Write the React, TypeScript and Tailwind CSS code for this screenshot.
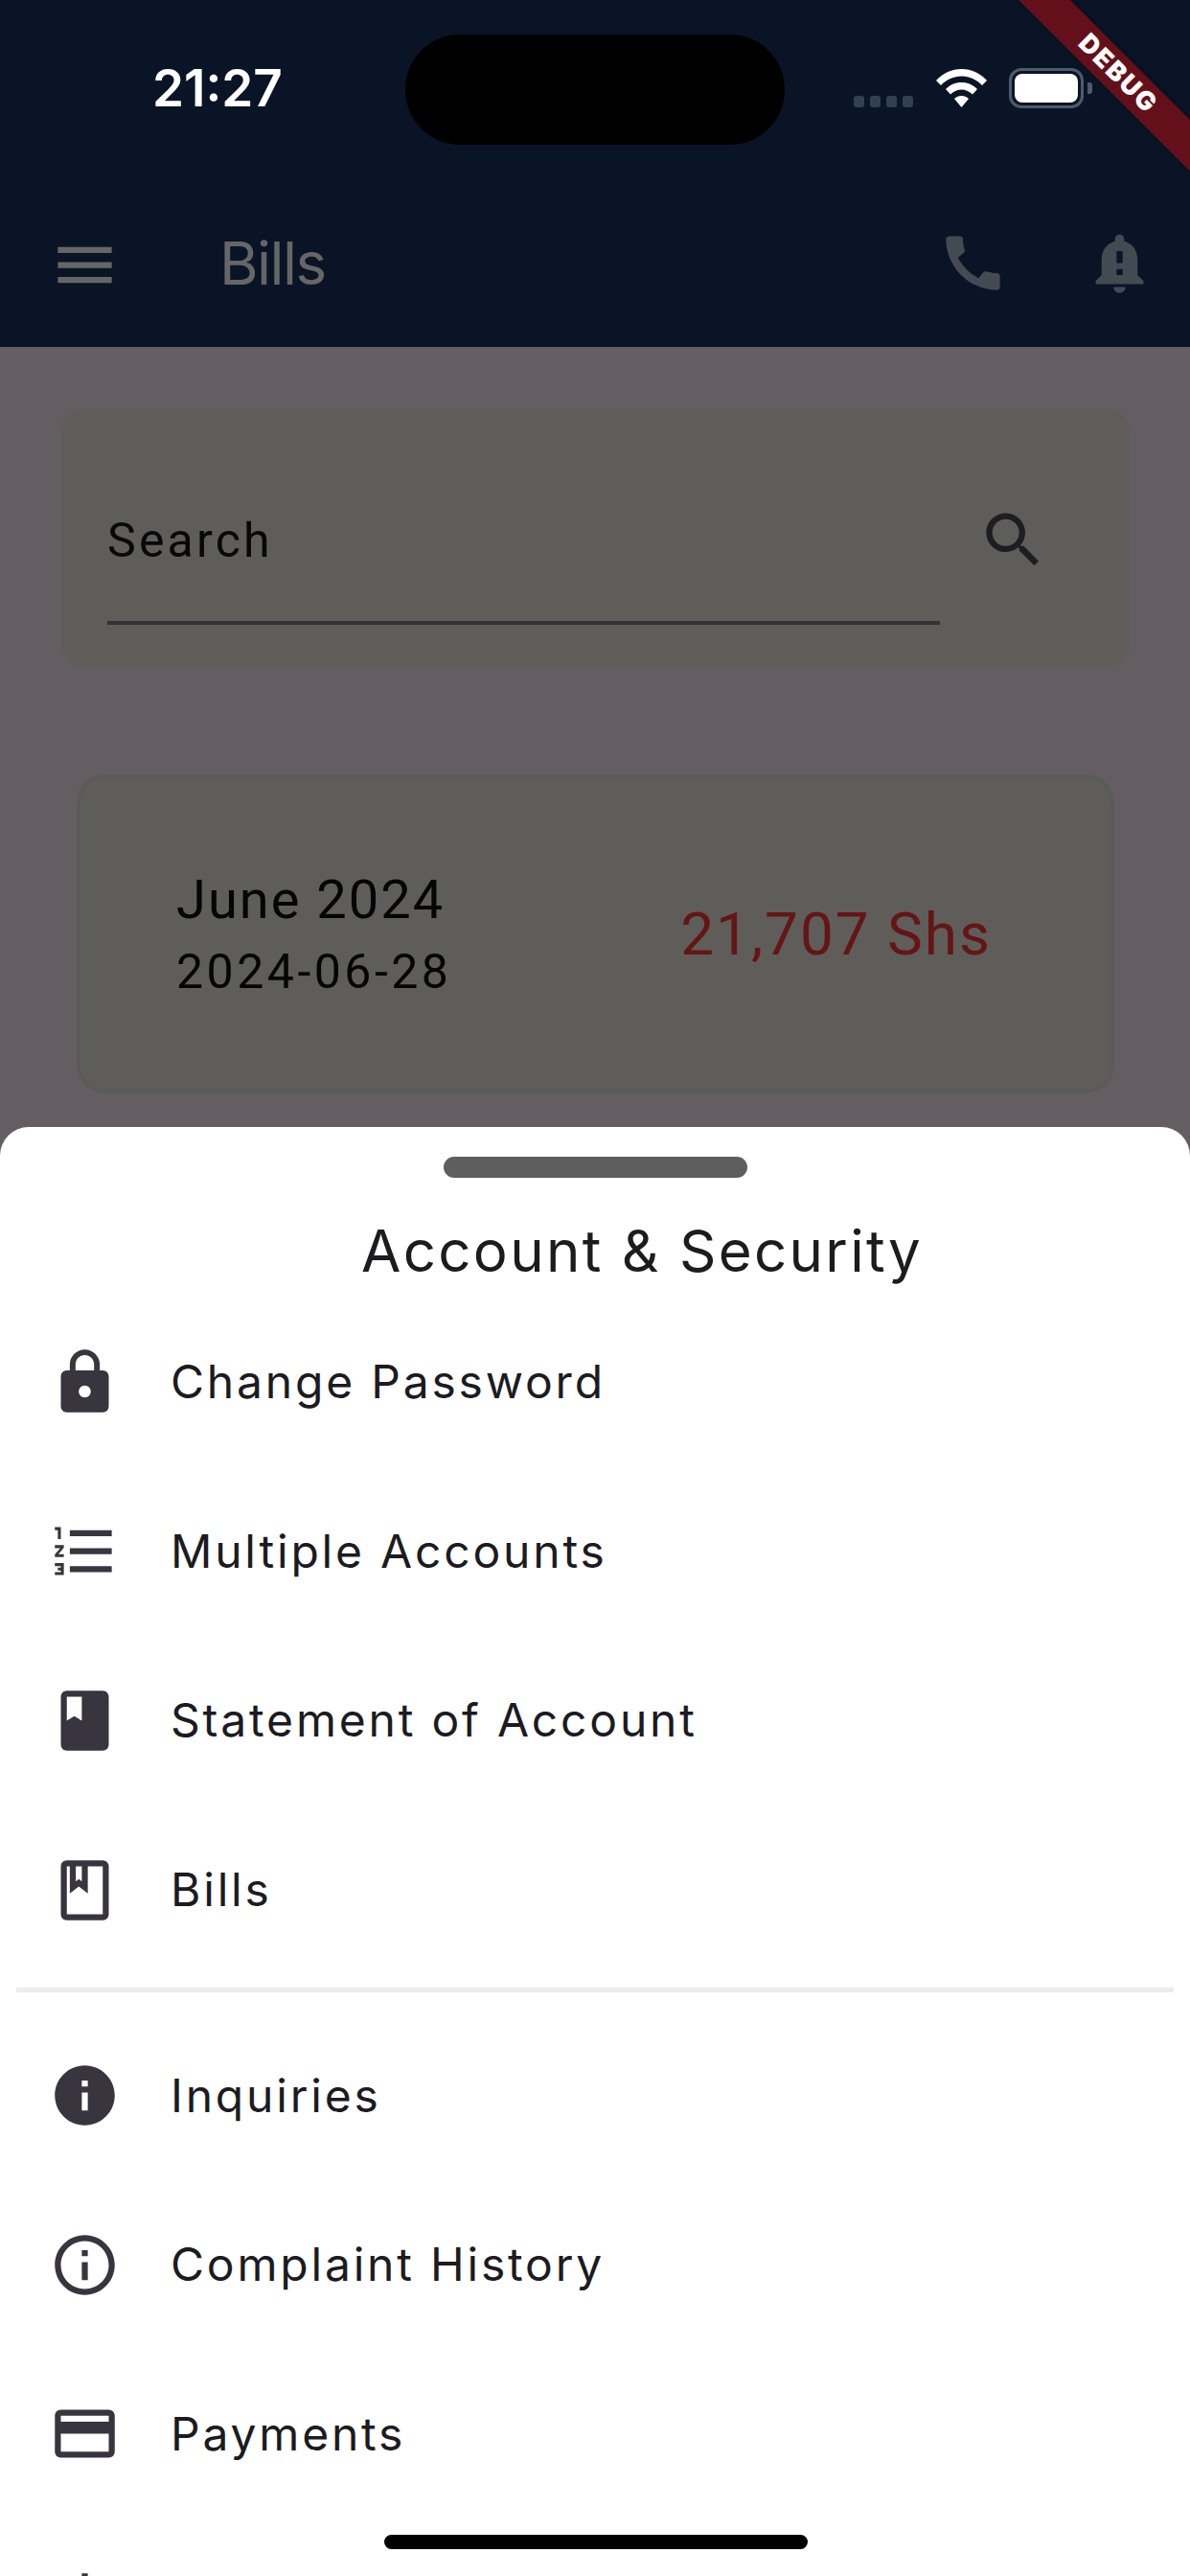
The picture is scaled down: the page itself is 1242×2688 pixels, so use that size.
const I = {
  menu: "M3 18h18v-2H3v2zm0-5h18v-2H3v2zm0-7v2h18V6H3z",
  call: "M20.01 15.38c-1.23 0-2.42-.2-3.53-.56-.35-.12-.74-.03-1.01.24l-1.57 1.97c-2.83-1.35-5.48-3.9-6.89-6.83l1.95-1.66c.27-.28.35-.67.24-1.02-.37-1.11-.56-2.3-.56-3.53 0-.54-.45-.99-.99-.99H4.19C3.65 3 3 3.24 3 3.99 3 13.28 10.73 21 20.01 21c.71 0 .99-.63.99-1.18v-3.45c0-.54-.45-.99-.99-.99z",
  bell: "M18 16v-5c0-3.07-1.63-5.64-4.5-6.32V4c0-.83-.67-1.5-1.5-1.5s-1.5.67-1.5 1.5v.68C7.64 5.36 6 7.92 6 11v5l-2 2v1h16v-1l-2-2zm-5 0h-2v-2h2v2zm0-4h-2V8h2v4zm-1 10c1.1 0 2-.9 2-2h-4c0 1.1.9 2 2 2z",
  search: "M15.5 14h-.79l-.28-.27C15.41 12.59 16 11.11 16 9.5 16 5.91 13.09 3 9.5 3S3 5.91 3 9.5 5.91 16 9.5 16c1.61 0 3.09-.59 4.23-1.57l.27.28v.79l5 4.99L20.49 19l-4.99-5zm-6 0C7.01 14 5 11.99 5 9.5S7.01 5 9.5 5 14 7.01 14 9.5 11.99 14 9.5 14z",
  lock: "M18 8h-1V6c0-2.76-2.24-5-5-5S7 3.24 7 6v2H6c-1.1 0-2 .9-2 2v10c0 1.1.9 2 2 2h12c1.1 0 2-.9 2-2V10c0-1.1-.9-2-2-2zm-6 9c-1.1 0-2-.9-2-2s.9-2 2-2 2 .9 2 2-.9 2-2 2zm3.1-9H8.9V6c0-1.71 1.39-3.1 3.1-3.1 1.71 0 3.1 1.39 3.1 3.1v2z",
  list: "M2 17h2v.5H3v1h1v.5H2v1h3v-4H2v1zm1-9h1V4H2v1h1v3zm-1 3h1.8L2 13.1v.9h3v-1H3.2L5 10.9V10H2v1zm5-6v2h14V5H7zm0 14h14v-2H7v2zm0-6h14v-2H7v2z",
  book: "M18 2H6c-1.1 0-2 .9-2 2v16c0 1.1.9 2 2 2h12c1.1 0 2-.9 2-2V4c0-1.1-.9-2-2-2zM6 4h5v8l-2.5-1.5L6 12V4z",
  bookO: "M18 2H6c-1.1 0-2 .9-2 2v16c0 1.1.9 2 2 2h12c1.1 0 2-.9 2-2V4c0-1.1-.9-2-2-2zM9 4h2v5l-1-.75L9 9V4zm9 16H6V4h1v9l3-2.25L13 13V4h5v16z",
  info: "M12 2C6.48 2 2 6.48 2 12s4.48 10 10 10 10-4.48 10-10S17.52 2 12 2zm1 15h-2v-6h2v6zm0-8h-2V7h2v2z",
  infoO: "M11 7h2v2h-2zm0 4h2v6h-2zm1-9C6.48 2 2 6.48 2 12s4.48 10 10 10 10-4.48 10-10S17.52 2 12 2zm0 18c-4.41 0-8-3.59-8-8s3.59-8 8-8 8 3.59 8 8-3.59 8-8 8z",
  card: "M20 4H4c-1.11 0-1.99.89-1.99 2L2 18c0 1.11.89 2 2 2h16c1.11 0 2-.89 2-2V6c0-1.11-.89-2-2-2zm0 14H4v-6h16v6zm0-10H4V6h16v2z",
  down: "M11 2h2v14l5.5-5.5 1.42 1.42L12 19.84 4.08 11.92 5.5 10.5 11 16z",
};

function Icon({ d, className }: { d: string; className: string }) {
  return (
    <svg viewBox="0 0 24 24" fill="currentColor" className={className}>
      <path d={d} />
    </svg>
  );
}

function Row({ icon, label }: { icon: string; label: string }) {
  return (
    <div className="flex h-[176.6px] items-center pl-[51px]">
      <Icon d={icon} className="h-[75px] w-[75px] shrink-0 text-[#38353f]" />
      <span className="ml-[52px] text-[48px] leading-none tracking-[2.8px] text-[#1c1b1f]">{label}</span>
    </div>
  );
}

export default function App() {
  return (
    <div className="relative flex h-[2688px] w-[1242px] flex-col overflow-hidden bg-[#645e62] font-['Inter',sans-serif]">
      {/* App bar */}
      <header className="flex h-[362px] shrink-0 flex-col bg-[#091526]">
        <div className="relative flex h-[187px] shrink-0 items-start">
          <span className="ml-[159px] mt-[62px] text-[53px] font-semibold leading-[60px] text-white">21:27</span>
          <div className="ml-[128px] mt-[36px] h-[115px] w-[396px] rounded-[57px] bg-black" />
          <div className="ml-[72px] mt-[100px] flex gap-[6px]">
            <i className="h-[12px] w-[11px] rounded-[3px] bg-[#33404f]" />
            <i className="h-[12px] w-[11px] rounded-[3px] bg-[#33404f]" />
            <i className="h-[12px] w-[11px] rounded-[3px] bg-[#33404f]" />
            <i className="h-[12px] w-[11px] rounded-[3px] bg-[#33404f]" />
          </div>
          <svg viewBox="0 0 53 40" fill="#fff" className="ml-[24px] mt-[72px] h-[40px] w-[53px]">
            <path d="M26.5 0C16.5 0 7.5 4 0 12l5 5C11 11 18.5 7.5 26.5 7.5S42 11 48 17l5-5C45.5 4 36.5 0 26.5 0z" />
            <path d="M26.5 14C20 14 14.5 16.5 10 21l5 5.500C18 23.500 22 21.500 26.500 21.500S35 23.500 38 26.500L43 21C38.500 16.500 33 14 26.500 14z" />
            <path d="M26.500 28C23.500 28 21 29 19 31L26.500 40 34 31C32 29 29.500 28 26.500 28z" />
          </svg>
          <div className="ml-[23px] mt-[71px] flex h-[42px] w-[78px] items-center justify-center rounded-[13px] border-[3px] border-[#4f5a6b]">
            <div className="h-[30px] w-[66px] rounded-[8px] bg-white" />
          </div>
          <div className="ml-[4px] mt-[86px] h-[12px] w-[5px] rounded-r-[3px] bg-[#4f5a6b]" />
        </div>
        <div className="flex flex-1 items-start">
          <Icon d={I.menu} className="ml-[51px] mt-[52px] h-[75px] w-[75px] text-[#666666]" />
          <span className="ml-[103px] mt-[52px] text-[62px] font-normal leading-[72px] tracking-[-1.5px] text-[#666666]">Bills</span>
          <div className="ml-auto mr-[36px] mt-[50px] flex gap-[78px] text-[#434a52]">
            <Icon d={I.call} className="h-[75px] w-[75px]" />
            <Icon d={I.bell} className="h-[75px] w-[75px]" />
          </div>
        </div>
      </header>

      {/* Page content under the scrim */}
      <main className="flex flex-1 flex-col">
        <section className="mx-[64px] mt-[64px] flex h-[271px] items-start rounded-[24px] bg-[#5e5d5a] pl-[48px] pr-[64px]">
          <div className="mt-[82px] flex h-[144px] w-[869px] items-start border-b-[4px] border-[#343138] pt-[27px]">
            <span className="font-['Roboto',sans-serif] text-[50px] leading-[58px] tracking-[3.2px] text-[#080808]">Search</span>
          </div>
          <Icon d={I.search} className="ml-[39px] mt-[100px] h-[75px] w-[75px] text-[#1e1d21]" />
        </section>
        <section className="ml-[80px] mt-[111px] flex h-[333px] w-[1083px] items-center justify-between rounded-[30px] border-[4px] border-[#5a5b59] bg-[#5e5d5a] pb-[3px] pl-[100px] pr-[124px] font-['Roboto',sans-serif]">
          <div className="flex flex-col">
            <span className="text-[56px] leading-[68px] tracking-[2px] text-[#050505]">June 2024</span>
            <span className="mt-[14px] text-[50px] leading-[54px] tracking-[3.5px] text-[#050505]">2024-06-28</span>
          </div>
          <span className="mt-[3px] text-[62px] leading-none tracking-[2px] text-[#651515]">21,707 Shs</span>
        </section>
      </main>

      {/* Bottom sheet */}
      <aside className="absolute inset-x-0 top-[1176px] h-[1600px] rounded-t-[30px] bg-white">
        <div className="mx-auto mt-[31px] h-[22px] w-[317px] rounded-full bg-[#5e5e5e]" />
        <h2 className="ml-[377px] mt-[40px] text-[60px] font-normal leading-[72px] tracking-[2.3px] text-[#1c1b1f]">Account &amp; Security</h2>
        <div className="mt-[13px] flex flex-col">
          <Row icon={I.lock} label="Change Password" />
          <Row icon={I.list} label="Multiple Accounts" />
          <Row icon={I.book} label="Statement of Account" />
          <Row icon={I.bookO} label="Bills" />
        </div>
        <hr className="mx-[17px] mt-[14px] border-0 border-t-[5px] border-[#ececec]" />
        <div className="mt-[19px] flex flex-col">
          <Row icon={I.info} label="Inquiries" />
          <Row icon={I.infoO} label="Complaint History" />
          <Row icon={I.card} label="Payments" />
          <Row icon={I.down} label="" />
        </div>
      </aside>

      {/* Home indicator */}
      <div className="absolute left-[401px] top-[2645px] h-[15px] w-[442px] rounded-full bg-black" />

      {/* Debug banner */}
      <div className="absolute left-[967px] top-[58px] flex h-[38px] w-[400px] rotate-45 items-center justify-center bg-[#64101a] font-['Inter',sans-serif] text-[27px] font-black tracking-[2px] text-white shadow-[0_0_8px_rgba(0,0,0,0.4)]">
        DEBUG
      </div>
    </div>
  );
}
